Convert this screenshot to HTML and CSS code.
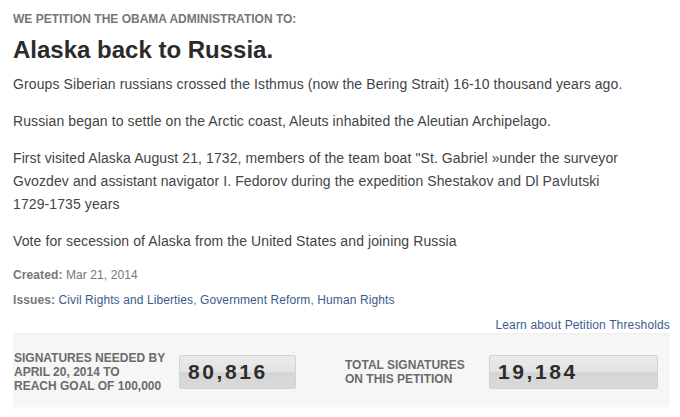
FILE: index.html
```html
<!DOCTYPE html>
<html>
<head>
<meta charset="utf-8">
<link rel="stylesheet" href="styles.css">
</head>
<body>
<div class="page">
  <div class="kicker">WE PETITION THE OBAMA ADMINISTRATION TO:</div>
  <h1 class="title">Alaska back to Russia.</h1>
  <div class="body">
    <p>Groups Siberian russians crossed the Isthmus (now the Bering Strait) 16-10 thousand years ago.</p>
    <p>Russian began to settle on the Arctic coast, Aleuts inhabited the Aleutian Archipelago.</p>
    <p>First visited Alaska August 21, 1732, members of the team boat "St. Gabriel »under the surveyor Gvozdev and assistant navigator I. Fedorov during the expedition Shestakov and Dl Pavlutski <span class="nowrap">1729-1735</span> years</p>
    <p>Vote for secession of Alaska from the United States and joining Russia</p>
  </div>
  <div class="meta"><b>Created:</b> Mar 21, 2014</div>
  <div class="meta issues"><b>Issues:</b> <a href="#">Civil Rights and Liberties</a>, <a href="#">Government Reform</a>, <a href="#">Human Rights</a></div>
  <div class="learn"><a href="#">Learn about Petition Thresholds</a></div>
  <div class="stats">
    <div class="stat stat-needed">
      <div class="label label-needed">SIGNATURES NEEDED BY<br>APRIL 20, 2014 TO<br>REACH GOAL OF 100,000</div>
      <div class="counter counter-needed">80,816</div>
    </div>
    <div class="stat">
      <div class="label label-total">TOTAL SIGNATURES<br>ON THIS PETITION</div>
      <div class="counter counter-total">19,184</div>
    </div>
  </div>
</div>
</body>
</html>
```
FILE: styles.css
```css
html, body {
  margin: 0;
  padding: 0;
  background: #fff;
}
body {
  font-family: "Liberation Sans", Arial, sans-serif;
  color: #444;
}
.page {
  padding: 12px 10px 0 13px;
}
.kicker {
  font-size: 12px;
  line-height: 14px;
  font-weight: bold;
  color: #777;
}
.title {
  margin: 10px 0 0 0;
  font-size: 24px;
  line-height: 28px;
  font-weight: bold;
  color: #2b2b2b;
}
.body {
  margin-top: 9px;
}
.body p {
  margin: 0 0 14px 0;
  font-size: 14px;
  line-height: 23px;
  letter-spacing: 0.1px;
  color: #444;
}
.nowrap {
  white-space: nowrap;
}
.meta {
  font-size: 12px;
  line-height: 16px;
  letter-spacing: 0.1px;
  color: #777;
  margin-top: 14px;
}
.meta b {
  color: #777;
}
.issues {
  margin-top: 9px;
}
a {
  color: #3c5c8c;
  text-decoration: none;
}
.learn {
  text-align: right;
  font-size: 12px;
  line-height: 16px;
  letter-spacing: 0.15px;
  margin-top: 9px;
}
.stats {
  margin-top: 0;
  height: 77px;
  display: flex;
  align-items: center;
  background: linear-gradient(#eeeeee 0, #f6f6f6 2px, #f6f6f6 70px, #fbfbfb 74px, #ffffff 77px);
}
.stat {
  display: flex;
  align-items: center;
}
.stat-needed {
  width: 332px;
}
.label {
  font-size: 12px;
  line-height: 14px;
  font-weight: bold;
  color: #6b6b6b;
}
.label-needed {
  width: 165px;
  padding-left: 1px;
}
.label-total {
  width: 144px;
}
.counter {
  height: 34px;
  box-sizing: border-box;
  border-radius: 3px;
  background: linear-gradient(#ebebeb 0, #e3e3e3 17px, #cfcfcf 18px, #d6d6d6 19px, #dadada 34px);
  box-shadow: inset 0 0 0 1px #d2d2d2;
  font-size: 21px;
  line-height: 34px;
  font-weight: bold;
  letter-spacing: 2.6px;
  color: #2d2d2d;
  padding-left: 9px;
}
.counter-needed {
  width: 117px;
}
.counter-total {
  width: 169px;
}
```
